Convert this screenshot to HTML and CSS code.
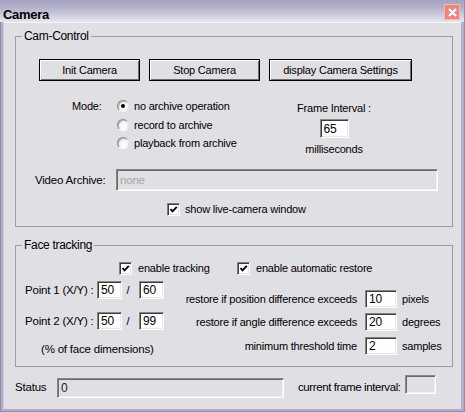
FILE: index.html
```html
<!DOCTYPE html>
<html>
<head>
<meta charset="utf-8">
<link rel="stylesheet" href="styles.css">
</head>
<body>
<div class="window">
  <div class="titlebar">
    <span class="title">Camera</span>
    <span class="close"><svg width="9" height="9" viewBox="0 0 9 9"><path d="M1 1 L8 8 M8 1 L1 8" stroke="#fff" stroke-width="2.2" fill="none"/></svg></span>
  </div>
  <div class="client">
    <fieldset class="group">
      <legend>Cam-Control</legend>
      <div class="btnrow">
        <button class="btn w1">Init Camera</button>
        <button class="btn w2">Stop Camera</button>
        <button class="btn w3">display Camera Settings</button>
      </div>
      <div class="moderow">
        <div class="modelabel">Mode:</div>
        <div class="radios">
          <div class="radio"><span class="rb on"></span>no archive operation</div>
          <div class="radio"><span class="rb"></span>record to archive</div>
          <div class="radio"><span class="rb"></span>playback from archive</div>
        </div>
        <div class="interval">
          <div class="txt">Frame Interval :</div>
          <div class="field ifield">65</div>
          <div class="txt">milliseconds</div>
        </div>
      </div>
      <div class="archrow">
        <span class="alabel">Video Archive:</span>
        <div class="field disabled afield">none</div>
      </div>
      <div class="chkrow">
        <span class="cb"><svg width="9" height="9" viewBox="0 0 9 9"><path d="M1.5 4 L3.5 6.3 L7.8 1.8" stroke="#000" stroke-width="1.9" fill="none"/></svg></span>
        <span>show live-camera window</span>
      </div>
    </fieldset>

    <fieldset class="group face">
      <legend>Face tracking</legend>
      <div class="trackrow">
        <div class="titem first">
          <span class="cb"><svg width="9" height="9" viewBox="0 0 9 9"><path d="M1.5 4 L3.5 6.3 L7.8 1.8" stroke="#000" stroke-width="1.9" fill="none"/></svg></span>
          <span>enable tracking</span>
        </div>
        <div class="titem">
          <span class="cb"><svg width="9" height="9" viewBox="0 0 9 9"><path d="M1.5 4 L3.5 6.3 L7.8 1.8" stroke="#000" stroke-width="1.9" fill="none"/></svg></span>
          <span>enable automatic restore</span>
        </div>
      </div>
      <div class="cols">
        <div class="leftcol">
          <div class="prow">
            <span class="plabel">Point 1 (X/Y) :</span>
            <div class="field pfield">50</div>
            <span class="slash">/</span>
            <div class="field pfield">60</div>
          </div>
          <div class="prow">
            <span class="plabel">Point 2 (X/Y) :</span>
            <div class="field pfield">50</div>
            <span class="slash">/</span>
            <div class="field pfield">99</div>
          </div>
          <div class="note">(% of face dimensions)</div>
        </div>
        <div class="rightcol">
          <div class="rrow">
            <span class="rlabel">restore if position difference exceeds</span>
            <div class="field rfield">10</div>
            <span class="unit">pixels</span>
          </div>
          <div class="rrow">
            <span class="rlabel">restore if angle difference exceeds</span>
            <div class="field rfield">20</div>
            <span class="unit">degrees</span>
          </div>
          <div class="rrow">
            <span class="rlabel">minimum threshold time</span>
            <div class="field rfield">2</div>
            <span class="unit">samples</span>
          </div>
        </div>
      </div>
    </fieldset>

    <div class="statusrow">
      <span class="slabel">Status</span>
      <div class="field disabled sfield dark">0</div>
      <span class="clabel">current frame interval:</span>
      <div class="field disabled cfield"></div>
    </div>
  </div>
</div>
</body>
</html>
```

FILE: styles.css
```css
* { box-sizing: border-box; }
html, body { margin: 0; padding: 0; }
body {
  width: 465px;
  height: 412px;
  overflow: hidden;
  font-family: "Liberation Sans", Arial, sans-serif;
  font-size: 11px;
  letter-spacing: -0.2px;
  color: #000;
  background: #a7a5bf;
  white-space: nowrap;
}
.window {
  width: 465px;
  height: 412px;
  display: flex;
  flex-direction: column;
  background: linear-gradient(to right, #8f8dab 0, #8f8dab 1px, #b2b0c8 1px, #b2b0c8 465px);
  border-right: 1px solid #8f8dab;
  border-bottom: 1px solid #8f8dab;
}
.titlebar {
  height: 22px;
  flex: none;
  display: flex;
  align-items: flex-start;
  justify-content: space-between;
  background: linear-gradient(to bottom, #a4a2bf 0%, #b4b2cb 35%, #d2d1df 75%, #e6e6ee 100%);
  padding: 0 4px 0 3px;
}
.title {
  font-weight: bold;
  font-size: 13px;
  letter-spacing: -0.3px;
  line-height: 15px;
  margin-top: 7px;
}
.close {
  width: 16px;
  height: 16px;
  margin-top: 4px;
  background: #e98680;
  border: 1px solid #f5b8b3;
  display: flex;
  align-items: center;
  justify-content: center;
}
.close svg { display: block; }
.client {
  flex: 1;
  margin: 0 3px 2px 3px;
  background: #e0dfe3;
  border-top: 1px solid #f6f6f8;
  border-left: 1px solid #c9c8d8;
  padding: 7px 8px 0 11px;
  display: flex;
  flex-direction: column;
}
fieldset.group {
  margin: 0;
  padding: 0 0 10px 0;
  border: 1px solid #9c9ca2;
  min-width: 0;
}
legend {
  margin-left: 6px;
  padding: 0 2px;
  line-height: 13px;
  font-size: 12px;
  letter-spacing: -0.3px;
}
.btnrow {
  display: flex;
  gap: 9px;
  padding-left: 23px;
  margin-top: 16px;
}
.btn {
  height: 22px;
  border: 1px solid #000;
  background: #e0dfe3;
  font-family: inherit;
  font-size: 11px;
  letter-spacing: -0.2px;
  color: #000;
  padding: 0;
  box-shadow: inset 1px 1px 0 #fff, inset -1px -1px 0 #6e6e72;
}
.w1 { width: 101px; }
.w2 { width: 111px; }
.w3 { width: 143px; }
.moderow {
  display: flex;
  margin-top: 16px;
  padding-left: 56px;
}
.modelabel { width: 45px; line-height: 18.5px; }
.radios { width: 180px; }
.radio {
  display: flex;
  align-items: center;
  height: 18.5px;
}
.rb {
  width: 12px;
  height: 12px;
  border-radius: 50%;
  margin-right: 5px;
  background: radial-gradient(circle at 60% 60%, #ffffff 0, #f4f4f4 50%, #dcdcdc 100%);
  border: 1px solid;
  border-color: #8a8a8a #e8e8e8 #ffffff #8a8a8a;
  box-shadow: inset 1px 1px 0 #b8b8b8;
  position: relative;
}
.rb.on::after {
  content: "";
  position: absolute;
  left: 3px;
  top: 3px;
  width: 4px;
  height: 4px;
  border-radius: 50%;
  background: #000;
}
.interval {
  width: 74px;
  display: flex;
  flex-direction: column;
  align-items: center;
  padding-top: 4.5px;
}
.interval .txt { line-height: 13px; }
.field {
  background: #fff;
  border: 1px solid;
  border-color: #868686 #ffffff #ffffff #868686;
  box-shadow: inset 1px 1px 0 #3c3c3c, inset -1px -1px 0 #e8e8e8;
  padding-left: 3px;
  display: flex;
  align-items: center;
  font-size: 12px;
  letter-spacing: -0.2px;
}
.field.disabled {
  background: #e0dfe3;
  color: #a6a6a6;
  box-shadow: inset 1px 1px 0 #6a6a6a, inset -1px -1px 0 #f0f0f0;
}
.field.dark { color: #222; }
.ifield {
  width: 29px;
  height: 19px;
  margin: 4.5px 0;
}
.archrow {
  display: flex;
  align-items: center;
  margin-top: 13px;
  padding-left: 19px;
}
.alabel { width: 81px; font-size: 11.5px; }
.afield { width: 322px; height: 22px; font-size: 11.5px; }
.chkrow {
  display: flex;
  align-items: center;
  margin-top: 12px;
  padding-left: 151px;
  height: 13px;
}
.cb {
  width: 13px;
  height: 13px;
  margin-right: 5px;
  background: #fff;
  border: 1px solid;
  border-color: #7e7e7e #ffffff #ffffff #7e7e7e;
  box-shadow: inset 1px 1px 0 #3c3c3c, inset -1px -1px 0 #e4e4e4;
  display: flex;
  align-items: center;
  justify-content: center;
  flex: none;
}
.cb svg { display: block; }
.face { margin-top: 12px !important; }
.trackrow {
  display: flex;
  margin-top: 10px;
  padding-left: 103px;
  height: 13px;
}
.titem { display: flex; align-items: center; }
.titem .cb { margin-right: 6px; }
.titem.first { width: 118px; }
.cols { display: flex; }
.leftcol {
  width: 148px;
  padding-left: 9px;
  margin-top: 6px;
}
.prow {
  display: flex;
  align-items: center;
  height: 18px;
}
.prow + .prow { margin-top: 13px; }
.plabel { width: 72px; font-size: 11.5px; }
.pfield { width: 25px; height: 18px; }
.slash { width: 17px; text-align: center; padding-right: 5px; }
.note {
  margin-top: 13.5px;
  padding-left: 16px;
  line-height: 13px;
  font-size: 11.5px;
}
.rightcol {
  margin-top: 15px;
}
.rrow {
  display: flex;
  align-items: center;
  height: 18px;
}
.rrow + .rrow { margin-top: 5.5px; }
.rlabel { width: 193px; text-align: right; margin-right: 8px; }
.rfield { width: 32px; height: 18px; }
.unit { margin-left: 5px; }
.statusrow {
  display: flex;
  align-items: flex-start;
  margin-top: 8px;
}
.slabel { width: 42px; margin-top: 6px; line-height: 13px; font-size: 11.5px; }
.sfield { width: 227px; height: 20px; margin-top: 3px; }
.clabel { margin-left: 14px; width: 107px; margin-top: 5.5px; line-height: 13px; font-size: 11.5px; letter-spacing: -0.4px; }
.cfield { width: 31px; height: 19px; }
```
